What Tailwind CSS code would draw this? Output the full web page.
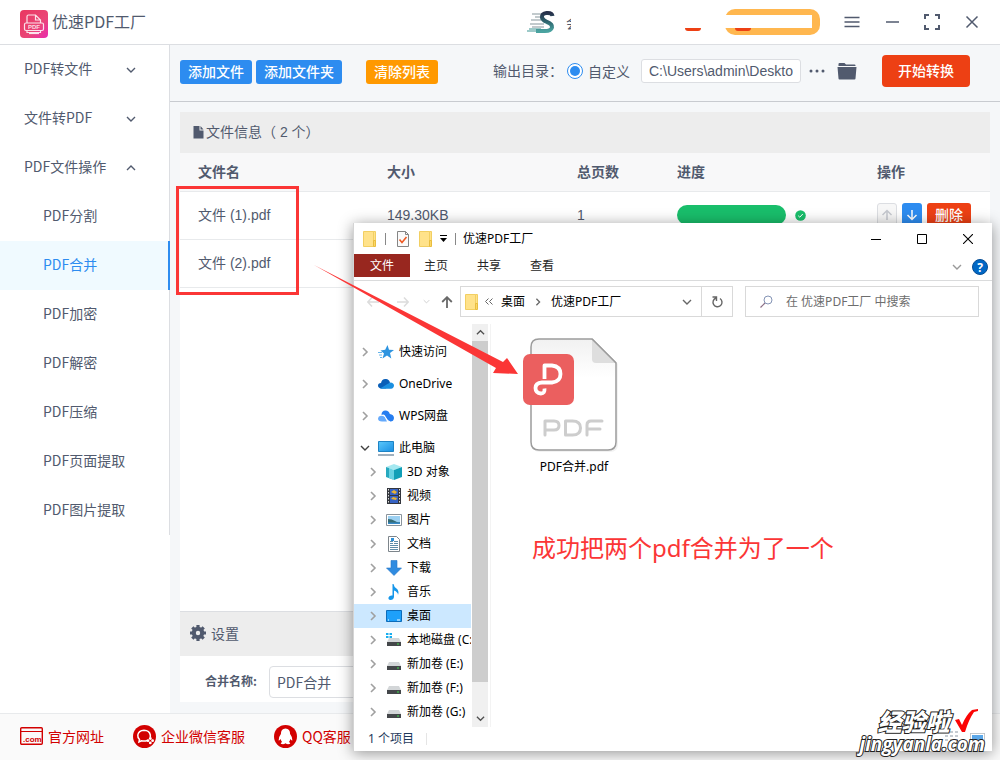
<!DOCTYPE html>
<html lang="zh-CN">
<head>
<meta charset="utf-8">
<meta name="viewport" content="width=device-width, initial-scale=1">
<title>优速PDF工厂</title>
<script src="https://cdn.jsdelivr.net/npm/@tailwindcss/browser@4"></script>
</head>
<body class="relative flex min-h-screen flex-col overflow-hidden bg-white font-['Noto_Sans_CJK_SC',sans-serif] text-sm leading-5 text-[#515a6e]">

<svg class="absolute size-0" aria-hidden="true">
  <defs>
    <linearGradient id="pink" x1="0" y1="0" x2="1" y2="1"><stop offset="0" stop-color="#e9365f"/><stop offset=".6" stop-color="#ea4677"/><stop offset="1" stop-color="#e92bb0"/></linearGradient>
    <linearGradient id="teal" x1="0" y1="0" x2="0" y2="1"><stop offset="0" stop-color="#27304a"/><stop offset=".5" stop-color="#2f6770"/><stop offset="1" stop-color="#4aa3a0"/></linearGradient>
    <linearGradient id="paper" x1="0" y1="0" x2="0" y2="1"><stop offset="0" stop-color="#f1f1f1"/><stop offset=".35" stop-color="#fff"/></linearGradient>
    <linearGradient id="sky" x1="0" y1="0" x2="1" y2="1"><stop offset="0" stop-color="#5cc8fb"/><stop offset="1" stop-color="#1a8fe3"/></linearGradient>
    <symbol id="down" viewBox="0 0 10 10"><path d="M1 3l4 4 4-4" fill="none" stroke="currentColor" stroke-width="1.4"/></symbol>
    <symbol id="up" viewBox="0 0 10 10"><path d="M1 7l4-4 4 4" fill="none" stroke="currentColor" stroke-width="1.4"/></symbol>
    <symbol id="right" viewBox="0 0 10 10"><path d="M3 1l4 4-4 4" fill="none" stroke="currentColor" stroke-width="1.6"/></symbol>
    <symbol id="folder" viewBox="0 0 14 16"><path d="M.5.5h10v15H.5z" fill="#ffe28a" stroke="#f2cf62"/><path d="M10.500.500h2v10h-2z" fill="#ffe28a" stroke="#f2cf62"/><path d="M10.500 9.500h2v6h-2z" fill="#fbd766" stroke="#e9bd3f"/></symbol>
    <symbol id="drive" viewBox="0 0 16 16"><path d="M3 6h10l2 4H1z" fill="#d3d6d8"/><path d="M1 10h14v4H1z" fill="#44474a"/><path d="M11 11.500h2v1h-2z" fill="#3fe04a"/></symbol>
  </defs>
</svg>

<header class="flex h-[45px] shrink-0 items-center border-b border-[#dcdee2] pr-5 pl-5">
  <svg class="mt-[3px] size-7 shrink-0" viewBox="0 0 28 28"><rect width="28" height="28" rx="4" fill="url(#pink)"/><g fill="none" stroke="#fff" stroke-width="1.200" opacity=".85"><path d="M7 13V6.500Q7 5 8.500 5h7l5 5v3M15.500 5v5h5M7 20v2.500h13.500V20"/><rect x="4.500" y="13" width="19" height="7.500" rx="1.500"/><path d="M9 23.500h10"/></g><text x="8" y="19" font-family="Liberation Sans" font-size="6" font-weight="bold" fill="#fff" opacity=".8">PDF</text></svg>
  <h1 class="ml-1 pb-[2px] text-base leading-6">优速PDF工厂</h1>
  <div class="ml-auto flex items-center">
    <svg class="h-6 w-7" viewBox="0 0 28 24"><g stroke="#aeb9bd" stroke-width="1.300"><path d="M5 4h10M8 7h7M4 10h10M3 14h14M5 17h12"/></g><path d="M0 21h20M2 19h12" stroke="#7db9b8" stroke-width="1.500"/><path d="M25.500 6Q25 2.500 19.500 3 14.500 3.500 15 7.500 15.500 10 20 12 25.500 14 25 17.500 24 21 18 21H9" fill="none" stroke="url(#teal)" stroke-width="4"/></svg>
    <span class="ml-[11px] w-[5px] overflow-hidden">会</span>
    <span class="mt-[14px] ml-[114px] h-[3px] w-4 rounded-b-full bg-[#ed4014]"></span>
    <span class="relative ml-6 h-[26px] w-[95px] rounded-[10px] bg-[#ffb74f]">
      <span class="absolute top-[6px] right-2 left-0 h-[13px] bg-white"></span>
      <span class="absolute top-[19px] left-[10px] h-[3px] w-4 rounded-b-full bg-[#ed4014]"></span>
    </span>
    <button aria-label="菜单" class="ml-6"><svg class="size-4" viewBox="0 0 16 16"><path d="M.5 3.500h15M.5 8h15M.5 12.500h15" stroke="#515a6e" stroke-width="1.500"/></svg></button>
    <button aria-label="最小化" class="ml-6"><svg class="size-4" viewBox="0 0 16 16"><path d="M2 8h13" stroke="#515a6e" stroke-width="1.500"/></svg></button>
    <button aria-label="全屏" class="ml-6"><svg class="size-4" viewBox="0 0 16 16"><path d="M1 5V1h4M11 1h4v4M15 11v4h-4M5 15H1v-4" fill="none" stroke="#515a6e" stroke-width="2"/></svg></button>
    <button aria-label="关闭" class="ml-6"><svg class="size-4" viewBox="0 0 16 16"><path d="M2.500 2.500l11 11M13.500 2.500l-11 11" stroke="#515a6e" stroke-width="1.500"/></svg></button>
  </div>
</header>

<div class="flex flex-1">
  <nav class="w-[170px] shrink-0">
    <div class="flex flex-col border-r border-[#dcdee2]">
      <button class="flex h-[49px] items-center justify-between pr-[33px] pb-[3px] pl-6"><span>PDF转文件</span><svg class="mt-[3px] size-[10px]"><use href="#down"/></svg></button>
      <button class="flex h-[49px] items-center justify-between pr-[33px] pb-[3px] pl-6"><span>文件转PDF</span><svg class="mt-[3px] size-[10px]"><use href="#down"/></svg></button>
      <button class="flex h-[49px] items-center justify-between pr-[33px] pb-[3px] pl-6"><span>PDF文件操作</span><svg class="mt-[3px] size-[10px]"><use href="#up"/></svg></button>
      <a href="#" class="flex h-[49px] items-center pb-[3px] pl-[43px]">PDF分割</a>
      <a href="#" class="-mr-px flex h-[49px] items-center border-r-2 border-[#2d8cf0] bg-[#f0faff] pb-[3px] pl-[43px] text-[#2d8cf0]">PDF合并</a>
      <a href="#" class="flex h-[49px] items-center pb-[3px] pl-[43px]">PDF加密</a>
      <a href="#" class="flex h-[49px] items-center pb-[3px] pl-[43px]">PDF解密</a>
      <a href="#" class="flex h-[49px] items-center pb-[3px] pl-[43px]">PDF压缩</a>
      <a href="#" class="flex h-[49px] items-center pb-[3px] pl-[43px]">PDF页面提取</a>
      <a href="#" class="flex h-[49px] items-center pb-[3px] pl-[43px]">PDF图片提取</a>
    </div>
  </nav>

  <main class="flex min-w-0 flex-1 flex-col bg-[#f5f7f9]">
    <div class="flex h-[57px] items-center border-b border-[#c8cbd0] pr-[30px] pb-1 pl-[10px]">
      <button class="mt-[2px] h-6 w-[72px] rounded-[3px] bg-[#2d8cf0] pb-[2px] leading-5 font-medium text-white">添加文件</button>
      <button class="mt-[2px] ml-1 h-6 w-[86px] rounded-[3px] bg-[#2d8cf0] pb-[2px] leading-5 font-medium text-white">添加文件夹</button>
      <button class="mt-[2px] ml-6 h-6 w-[72px] rounded-[3px] bg-[#ff9900] pb-[2px] leading-5 font-medium text-white">清除列表</button>
      <span class="ml-auto pb-[2px]">输出目录：</span>
      <label class="ml-1 flex items-center gap-[5px]"><input type="radio" name="out" checked class="size-4 appearance-none rounded-full border border-[#2d8cf0] bg-white p-[2px] before:block before:size-full before:rounded-full before:bg-[#2d8cf0]">自定义</label>
      <input aria-label="输出目录" value="C:\Users\admin\Deskto" class="ml-[11px] h-6 w-40 rounded-[3px] border border-[#dcdee2] bg-white px-[7px] font-['Liberation_Sans',sans-serif]">
      <button aria-label="更多" class="ml-2"><svg class="h-4 w-4" viewBox="0 0 16 16" fill="#515a6e"><circle cx="2" cy="8" r="1.500"/><circle cx="8" cy="8" r="1.500"/><circle cx="14" cy="8" r="1.500"/></svg></button>
      <button aria-label="打开文件夹" class="ml-3"><svg class="h-5 w-5" viewBox="0 0 20 20" fill="#515a6e"><path d="M1.500 5V3Q1.500 2 2.500 2h5l1.500 1.500h8.500q1 0 1 1V5z"/><path d="M.5 6h19l-1 11.500q0 1-1 1h-15q-1 0-1-1z"/></svg></button>
      <button class="ml-[25px] h-8 w-[88px] rounded bg-[#ed4014] pb-[2px] font-medium text-white">开始转换</button>
    </div>

    <div class="mt-[10px] mr-[10px] ml-[10px] flex flex-1 flex-col bg-white">
      <h2 class="flex h-[41px] items-center bg-[#ededed] pb-px pl-3 font-['Liberation_Sans','Noto_Sans_CJK_SC',sans-serif]"><svg class="h-[14px] w-[14px]" viewBox="0 0 14 14" fill="#515a6e"><path d="M1.500 1h6v4.500h4V13.500h-10zM8.500 1l3 3.500h-3z"/></svg>文件信息（ 2 个）</h2>
      <table class="w-full table-fixed border-collapse text-left font-['Liberation_Sans','Noto_Sans_CJK_SC',sans-serif]">
        <colgroup><col><col class="w-[190px]"><col class="w-[100px]"><col class="w-[200px]"><col class="w-[131px]"></colgroup>
        <thead class="bg-[#f8f8f9]">
          <tr class="h-[38px] border-b border-[#e8eaec]"><th class="pl-[18px]">文件名</th><th class="pl-[18px]">大小</th><th class="pl-[18px]">总页数</th><th class="pl-[18px]">进度</th><th class="pl-[18px]">操作</th></tr>
        </thead>
        <tbody>
          <tr class="h-12 border-b border-[#e8eaec]"><td class="pl-[18px]">文件 (1).pdf</td><td class="pl-[18px]">149.30KB</td><td class="pl-[18px]">1</td>
            <td class="pl-[18px]"><div class="flex items-center gap-[9px]"><span class="h-5 w-[109px] rounded-full bg-[#19be6b]"></span><svg class="size-[11px]" viewBox="0 0 11 11"><circle cx="5.500" cy="5.500" r="5.300" fill="#19be6b"/><path d="M3.200 5.700l1.600 1.500 3-3.200" fill="none" stroke="#fff"/></svg></div></td>
            <td class="pl-[18px]"><div class="flex gap-[5px]">
              <button aria-label="上移" class="grid h-6 w-5 place-items-center rounded-[3px] border border-[#dcdee2] bg-[#f7f7f7]"><svg class="h-3 w-3" viewBox="0 0 12 12"><path d="M6 11V1.500M1.500 6L6 1.500 10.500 6" fill="none" stroke="#c5c8ce" stroke-width="1.500"/></svg></button>
              <button aria-label="下移" class="grid h-6 w-5 place-items-center rounded-[3px] bg-[#2d8cf0]"><svg class="h-3 w-3" viewBox="0 0 12 12"><path d="M6 1v9.500M1.500 6L6 10.500 10.500 6" fill="none" stroke="#fff" stroke-width="1.500"/></svg></button>
              <button class="h-6 w-11 rounded-[3px] bg-[#ed4014] font-medium text-white">删除</button></div></td></tr>
          <tr class="h-12 border-b border-[#e8eaec]"><td class="pl-[18px]">文件 (2).pdf</td><td></td><td></td><td></td><td></td></tr>
        </tbody>
      </table>
    </div>
    <section class="mx-[10px] mb-[11px] bg-white">
      <h2 class="flex h-[45px] items-center gap-[5px] border-t border-[#dcdee2] bg-[#ededed] pb-[2px] pl-[10px]"><svg class="size-4" viewBox="0 0 16 16"><circle cx="8" cy="8" r="4.200" fill="none" stroke="#515a6e" stroke-width="4"/><path d="M8 0v3M8 13v3M0 8h3M13 8h3M2.300 2.300l2 2M11.700 11.700l2 2M13.700 2.300l-2 2M4.300 11.700l-2 2" stroke="#515a6e" stroke-width="3.200"/></svg>设置</h2>
      <div class="flex h-[46px] items-center pt-[6px] pl-[25px]">
        <label for="merge" class="w-16 pb-[2px] text-xs font-bold">合并名称:</label>
        <input id="merge" value="PDF合并" class="h-8 w-60 rounded border border-[#dcdee2] px-[7px]">
      </div>
    </section>
  </main>
</div>

<footer class="flex h-[47px] shrink-0 items-center border-t border-[#e8eaec] bg-[#fafafa] pb-[2px] pl-5 text-[#d20000]">
  <a href="#" class="flex items-center gap-[5px]"><svg class="h-[18px] w-[23px]" viewBox="0 0 23 18"><rect x=".7" y=".7" width="21.600" height="16.600" rx="1" fill="none" stroke="currentColor" stroke-width="1.400"/><path d="M1 4.500h21" stroke="currentColor"/><text x="3" y="14.500" font-family="Liberation Sans" font-size="8" font-weight="bold" fill="currentColor">.com</text></svg>官方网址</a>
  <a href="#" class="ml-[29px] flex items-center gap-[5px]"><svg class="size-[23px]" viewBox="0 0 23 23"><circle cx="11.500" cy="11.500" r="11.500" fill="currentColor"/><path d="M14 15.500Q12 16.500 8.500 15.800L6 17l.5-2.500Q4.500 12.500 4.800 10 5.500 5.500 11 5.200 16.500 5.300 17.300 10v2" fill="none" stroke="#fff" stroke-width="1.500"/><g fill="#fff"><circle cx="17.300" cy="13.500" r="1.400"/><circle cx="15" cy="15.700" r="1.400"/><circle cx="19.600" cy="15.700" r="1.400"/><circle cx="17.300" cy="17.900" r="1.400"/></g></svg>企业微信客服</a>
  <a href="#" class="ml-[29px] flex items-center gap-[5px]"><svg class="size-[23px]" viewBox="0 0 23 23"><circle cx="11.500" cy="11.500" r="11.500" fill="currentColor"/><path d="M11.500 3.500Q6.800 3.800 6.900 9 4.500 12 4.600 15.500q1 0 2-1.500.5 2 1.500 3-1.500.7-1.300 1.800 2.700 1 4.700-.5 2 1.500 4.700.5.200-1.100-1.300-1.800 1-1 1.500-3 1 1.500 2 1.500.1-3.500-2.300-6.500.1-5.200-4.600-5.500z" fill="#fff"/></svg>QQ客服</a>
</footer>

<!-- File Explorer window floating over the application -->
<div class="absolute top-[223px] right-2 bottom-[9px] left-[353px] flex flex-col border-l border-[#d4d4d4] bg-white font-['Noto_Sans','Noto_Sans_CJK_SC',sans-serif] text-xs leading-4 text-black shadow-[0_2px_14px_rgba(0,0,0,0.42)]">
  <div class="flex h-[31px] shrink-0 items-center pl-[9px]">
    <svg class="h-4 w-[14px]"><use href="#folder"/></svg>
    <span class="ml-2 h-3 w-px bg-[#888]"></span>
    <svg class="ml-[11px] h-4 w-3" viewBox="0 0 12 16"><path d="M.5.500h8l3 3v12H.5z" fill="#fafafa" stroke="#858585"/><path d="M8.500.5v3h3" fill="none" stroke="#858585"/><path d="M2.500 8.500l2.500 3L9.500 6" fill="none" stroke="#ee5a24" stroke-width="1.600"/></svg>
    <svg class="ml-[10px] h-4 w-[14px]"><use href="#folder"/></svg>
    <svg class="ml-[7px] h-2 w-[7px]" viewBox="0 0 7 8"><path d="M0 .500h7" stroke="#000"/><path d="M0 3h7L3.500 7z"/></svg>
    <span class="ml-2 h-3 w-px bg-[#888]"></span>
    <span class="ml-[7px]">优速PDF工厂</span>
    <button aria-label="最小化" class="mr-[15px] ml-auto grid size-4 place-items-center"><svg class="size-[10px]" viewBox="0 0 10 10"><path d="M0 5.500h10" stroke="#000"/></svg></button>
    <button aria-label="最大化" class="mx-[15px] grid size-4 place-items-center"><svg class="size-[10px]" viewBox="0 0 10 10"><path d="M.5.500h9v9h-9z" fill="none" stroke="#000"/></svg></button>
    <button aria-label="关闭" class="mr-4 ml-[15px] grid size-4 place-items-center"><svg class="size-[10px]" viewBox="0 0 10 10"><path d="M0 0l10 10M10 0L0 10" stroke="#000" stroke-width="1.100"/></svg></button>
  </div>
  <div class="flex h-[27px] shrink-0 items-start gap-px border-b border-[#dadbdc] text-[#262626]">
    <button class="-mr-px h-[23px] w-14 bg-[#98271f] text-white">文件</button>
    <button class="h-[23px] px-[14px]">主页</button>
    <button class="h-[23px] px-[14px]">共享</button>
    <button class="h-[23px] px-[14px]">查看</button>
    <button aria-label="展开功能区" class="mt-2 mr-[9px] ml-auto text-[#999]"><svg class="size-[10px]"><use href="#down"/></svg></button>
    <button aria-label="帮助" class="mt-[5px] mr-1 grid size-4 place-items-center rounded-full border border-[#064d93] bg-[#0067c5] font-bold text-white">?</button>
  </div>
  <div class="flex h-[43px] shrink-0 items-start pt-[5px] pr-[13px]">
    <div class="flex h-[31px] w-[106px] shrink-0 items-center pl-[13px]">
      <button aria-label="后退"><svg class="size-3" viewBox="0 0 12 12"><path d="M12 6H1M5 1.500L.8 6 5 10.500" fill="none" stroke="#dcdcdc" stroke-width="1.500"/></svg></button>
      <button aria-label="前进" class="ml-[18px]"><svg class="size-3" viewBox="0 0 12 12"><path d="M0 6h11M7 1.500L11.200 6 7 10.500" fill="none" stroke="#dcdcdc" stroke-width="1.500"/></svg></button>
      <button aria-label="历史" class="ml-[14px] text-[#d0d0d0]"><svg class="size-[7px]"><use href="#down"/></svg></button>
      <button aria-label="上一级" class="ml-[11px]"><svg class="size-3" viewBox="0 0 12 12"><path d="M6 12V1.500M1.200 6L6 1.200 10.800 6" fill="none" stroke="#686868" stroke-width="1.800"/></svg></button>
    </div>
    <div class="flex h-[31px] flex-1 items-center border border-[#d9d9d9] pl-1">
      <svg class="h-4 w-[14px]"><use href="#folder"/></svg>
      <svg class="ml-[6px] h-[7px] w-2" viewBox="0 0 8 7"><path d="M3.500.5l-3 3 3 3M7.500.5l-3 3 3 3" fill="none" stroke="#666"/></svg>
      <a href="#" class="ml-2">桌面</a>
      <svg class="ml-[9px] size-2 text-[#666]"><use href="#right"/></svg>
      <a href="#" class="ml-[9px]">优速PDF工厂</a>
      <button aria-label="地址列表" class="mr-[9px] ml-auto text-[#666]"><svg class="size-[10px]"><use href="#down"/></svg></button>
      <button aria-label="刷新" class="grid h-full w-[31px] place-items-center border-l border-[#d9d9d9]"><svg class="size-3" viewBox="0 0 12 12"><path d="M9 2.500A4.500 4.500 0 1 1 5 2M1.500 1h4v4" fill="none" stroke="#666" stroke-width="1.400"/></svg></button>
    </div>
    <label class="ml-3 flex h-[31px] w-[234px] items-center border border-[#d9d9d9] pl-[14px]"><svg class="size-[13px]" viewBox="0 0 13 13"><path d="M.5 12.500L5 8" stroke="#8c6f86" stroke-width="1.200"/><circle cx="8" cy="5" r="4" fill="none" stroke="#8494b5"/></svg><input aria-label="搜索" placeholder="在 优速PDF工厂 中搜索" class="ml-[13px] min-w-0 flex-1 outline-none placeholder:text-[#6d6d6d]"></label>
  </div>

  <div class="flex min-h-0 flex-1">
    <nav class="flex w-[117px] shrink-0 flex-col overflow-hidden pt-4 whitespace-nowrap [&_svg]:shrink-0">
      <a href="#" class="mb-2 flex h-6 shrink-0 items-center pl-[6px]"><svg class="size-[10px] text-[#a0a0a0]"><use href="#right"/></svg><svg class="mr-[5px] ml-2 size-4" viewBox="0 0 16 16"><path d="M9.500 1l1.500 4.800 5 .2-4 3 1.300 5.500L9 11.500 4.500 14.500 6 9.500 2.500 6.500l4.700-.7z" fill="#2d94e0"/><path d="M0 8.500h4M1 11h3M2 13.500h2" stroke="#65b4ea"/></svg>快速访问</a>
      <a href="#" class="mb-2 flex h-6 shrink-0 items-center pl-[6px]"><svg class="size-[10px] text-[#a0a0a0]"><use href="#right"/></svg><svg class="mr-[5px] ml-2 size-4" viewBox="0 0 16 16"><path d="M3 7Q4 2.500 8 3q3 .2 4 3.500l-4 6H3.500Q0 12 0 9.500 0 7.300 3 7z" fill="#0a5fb8"/><path d="M2 12.500L9.500 8l3-1.500q3.300.3 3.500 3-.2 3-3 3.300H3.500z" fill="#1b8fe0"/></svg>OneDrive</a>
      <a href="#" class="mb-2 flex h-6 shrink-0 items-center pl-[6px]"><svg class="size-[10px] text-[#a0a0a0]"><use href="#right"/></svg><svg class="mr-[5px] ml-2 size-4" viewBox="0 0 16 16"><path d="M3.500 7Q3.500 2.500 7.500 2.500q3.500 0 4.300 3.500 4 .5 4.200 4-.3 3.500-3.500 3.500-2.500 0-4-3L7 7.500Q5.500 6 3.500 7z" fill="#267df0"/><path d="M6.500 8.500L9 13.500H4Q0 13.300 0 10.500q.2-2.500 3-2.800 2 0 3.500.8z" fill="#65aafc"/><path d="M5.500 7.500q2 1 3.200 3.700Q10 13.500 12 13.600" fill="none" stroke="#fff"/></svg>WPS网盘</a>
      <a href="#" class="flex h-6 shrink-0 items-center pl-[6px]"><svg class="size-[10px] text-[#404040]"><use href="#down"/></svg><svg class="mr-[5px] ml-2 size-4" viewBox="0 0 16 16"><path d="M.5 1.500h15v10H.5z" fill="url(#sky)" stroke="#1e83c4"/><path d="M0 15h16" stroke="#8096a8" stroke-width="1.500"/></svg>此电脑</a>
      <a href="#" class="flex h-6 shrink-0 items-center pl-[14px]"><svg class="size-[10px] text-[#a0a0a0]"><use href="#right"/></svg><svg class="mr-[5px] ml-2 size-4" viewBox="0 0 16 16"><path d="M0 3l8-3 8 3-8 3z" fill="#a5e8f0"/><path d="M0 3l3 1v9l5 3-8-3z" fill="#27a9bf"/><path d="M3 4l5 2v10l-5-2z" fill="#67d2e3"/><path d="M8 6l8-3v10l-8 3z" fill="#119fb7"/></svg>3D 对象</a>
      <a href="#" class="flex h-6 shrink-0 items-center pl-[14px]"><svg class="size-[10px] text-[#a0a0a0]"><use href="#right"/></svg><svg class="mr-[5px] ml-2 size-4" viewBox="0 0 16 16"><path d="M1 0h14v16H1z" fill="#33363d"/><path d="M4 1h8v6H4zM4 8h8v7H4z" fill="#3663c4"/><path d="M5 4l3-2 3 2-2 2zM5 11l2-2 4 1-1 2z" fill="#e9b332"/><path d="M2.500 1v14M13.500 1v14" stroke="#ddd" stroke-dasharray="1.500 1.500"/></svg>视频</a>
      <a href="#" class="flex h-6 shrink-0 items-center pl-[14px]"><svg class="size-[10px] text-[#a0a0a0]"><use href="#right"/></svg><svg class="mr-[5px] ml-2 size-4" viewBox="0 0 16 16"><path d="M.5 2.500h15v11H.5z" fill="#fff" stroke="#8a949c"/><path d="M2 4h12v8H2z" fill="#9bd0f2"/><path d="M2 7q4 0 7 2t5 1v2H2z" fill="#356b74"/><path d="M2 10.500h12V12H2z" fill="#3689c8"/></svg>图片</a>
      <a href="#" class="flex h-6 shrink-0 items-center pl-[14px]"><svg class="size-[10px] text-[#a0a0a0]"><use href="#right"/></svg><svg class="mr-[5px] ml-2 size-4" viewBox="0 0 16 16"><path d="M2.500.5h8l3 3v12h-11z" fill="#fff" stroke="#7d858b"/><path d="M4 5.500h3M4 7.500h3M8 5.500h4M8 7.500h4M4 9.500h8M4 11.500h8M4 13.500h8" stroke="#5f8da8"/><path d="M5 2h3v3H5z" fill="#2e8fd6"/></svg>文档</a>
      <a href="#" class="flex h-6 shrink-0 items-center pl-[14px]"><svg class="size-[10px] text-[#a0a0a0]"><use href="#right"/></svg><svg class="mr-[5px] ml-2 size-4" viewBox="0 0 16 16"><path d="M5 .500h6V8h4.500L8 15.500.5 8H5z" fill="#2f8be0" stroke="#2676c6" stroke-width=".6"/></svg>下载</a>
      <a href="#" class="flex h-6 shrink-0 items-center pl-[14px]"><svg class="size-[10px] text-[#a0a0a0]"><use href="#right"/></svg><svg class="mr-[5px] ml-2 size-4" viewBox="0 0 16 16"><path d="M7.500 0Q8 3 10.500 4.500 13.500 7 12 11q0-3-4-4.500V13q-.5 3-3.500 3Q2 15.500 2.500 13.500 3.500 11 6.500 11.500V0z" fill="#1596ea"/></svg>音乐</a>
      <a href="#" aria-current="true" class="flex h-6 shrink-0 items-center bg-[#cce8ff] pl-[14px]"><svg class="size-[10px] text-[#a0a0a0]"><use href="#right"/></svg><svg class="mr-[5px] ml-2 size-4" viewBox="0 0 16 16"><path d="M.5 2.500h15v11H.5z" fill="#1ea0fa" stroke="#0d6cb9"/><path d="M2 12h1M11 12h3" stroke="#fff"/></svg>桌面</a>
      <a href="#" class="flex h-6 shrink-0 items-center pl-[14px]"><svg class="size-[10px] text-[#a0a0a0]"><use href="#right"/></svg><svg class="mr-[5px] ml-2 size-4" viewBox="0 0 16 16"><use href="#drive"/><path d="M0 1h2.500v2H0zM3.500 1H6v2H3.500zM0 4h2.500v2H0zM3.500 4H6v2H3.500z" fill="#19aeef"/></svg>本地磁盘 (C:)</a>
      <a href="#" class="flex h-6 shrink-0 items-center pl-[14px]"><svg class="size-[10px] text-[#a0a0a0]"><use href="#right"/></svg><svg class="mr-[5px] ml-2 size-4"><use href="#drive"/></svg>新加卷 (E:)</a>
      <a href="#" class="flex h-6 shrink-0 items-center pl-[14px]"><svg class="size-[10px] text-[#a0a0a0]"><use href="#right"/></svg><svg class="mr-[5px] ml-2 size-4"><use href="#drive"/></svg>新加卷 (F:)</a>
      <a href="#" class="flex h-6 shrink-0 items-center pl-[14px]"><svg class="size-[10px] text-[#a0a0a0]"><use href="#right"/></svg><svg class="mr-[5px] ml-2 size-4"><use href="#drive"/></svg>新加卷 (G:)</a>
    </nav>
    <div class="ml-px flex w-4 shrink-0 flex-col items-center bg-[#f0f0f0] text-[#505050]">
      <button aria-label="向上滚动" class="grid h-[17px] place-items-center"><svg class="size-[9px]"><use href="#up"/></svg></button>
      <div class="w-full flex-1 bg-[#cdcdcd]"></div>
      <button aria-label="向下滚动" class="mt-7 grid h-[17px] place-items-center"><svg class="size-[9px]"><use href="#down"/></svg></button>
    </div>
    <div class="ml-[2px] flex-1 border-l border-[#f3f3f3] pt-[10px] pl-[23px]">
      <figure class="flex w-[120px] flex-col items-center">
        <svg class="h-[120px] w-[104px]" viewBox="0 0 104 120">
          <path d="M18 5h53l25 25v80q0 8-8 8H18q-8 0-8-8V13q0-8 8-8z" fill="#000" opacity=".05"/>
          <path d="M17 5h53l24 24v79q0 8-8 8H17q-8 0-8-8V13q0-8 8-8z" fill="url(#paper)" stroke="#9c9c9c" stroke-width="1.500"/>
          <path d="M70 5l24 24H74q-4 0-4-4z" fill="#dedede"/><path d="M70 5l24 24" stroke="#9c9c9c" stroke-width="1.500"/>
          <rect x="1" y="20" width="51" height="51" rx="7" fill="#eb5f5f"/>
          <path d="M22.500 45V31.500H30Q38.500 32.500 38.500 40T30 48.500H20Q13.500 49 13.500 54t5.500 5.500q4 0 3.500-5" fill="none" stroke="#fff" stroke-width="3.800" stroke-linejoin="round"/>
          <g fill="none" stroke="#cdcdcd" stroke-width="3" stroke-linejoin="round" stroke-linecap="round"><path d="M23 101V87h9q5 0 5 4.500T32 96h-9"/><path d="M43.500 87h7q8 0 8 7t-8 7h-7z"/><path d="M65 101V91q0-4 4-4h11M65 95h13"/></g>
        </svg>
        <figcaption class="mt-[5px]">PDF合并.pdf</figcaption>
      </figure>
    </div>
  </div>
  <div class="flex h-6 shrink-0 items-center pl-[14px] text-[#1e395b]">1 个项目<span class="ml-3 h-3 w-px bg-[#e5e5e5]"></span>
    <svg class="mr-[33px] ml-auto h-4 w-[14px]" viewBox="0 0 14 16"><path d="M0 1h3M5 1h3M10 1h3M0 5h3M5 5h3M10 5h3M0 9h3M5 9h3M10 9h3" stroke="#8d99a5"/></svg>
  </div>
</div>

<!-- Annotations -->
<div class="absolute top-[186px] left-[176px] h-[109px] w-[123px] border-[3px] border-[#fb3636]"></div>
<svg class="absolute top-[262px] left-[313px] h-[116px] w-[208px]" viewBox="0 0 208 116"><path d="M1 3L190 100 194 96 205 112 180 111 183 106z" fill="#fb3636"/></svg>
<p class="absolute top-[532px] left-[532px] font-['Noto_Sans','Noto_Sans_CJK_SC',sans-serif] text-2xl leading-8 text-[#fb3636]">成功把两个pdf合并为了一个</p>
<div class="absolute right-[15px] bottom-[5px] text-white [paint-order:stroke_fill] [-webkit-text-stroke:2px_#222]">
  <svg class="absolute right-0 bottom-2 h-[14px] w-[15px]" viewBox="0 0 15 14"><path d="M.5.500h14v13H.5z" fill="#fff" stroke="#8a949c"/><path d="M2 2h11v8H2z" fill="#5ba7e8"/></svg>
  <svg class="absolute right-[6px] bottom-[22px] h-6 w-6" viewBox="0 0 24 24"><path d="M0 11l4-1 3 6Q11 6 17 1l6-1v2l-4 1Q14 10 10 23H7z" fill="#fb0505"/></svg>
  <p class="relative pl-[18px] text-2xl leading-6 font-black italic">经验啦</p>
  <p class="relative font-['Open_Sans',sans-serif] text-[19px] leading-[22px] font-bold italic">jingyanla.com</p>
</div>
</body>
</html>
